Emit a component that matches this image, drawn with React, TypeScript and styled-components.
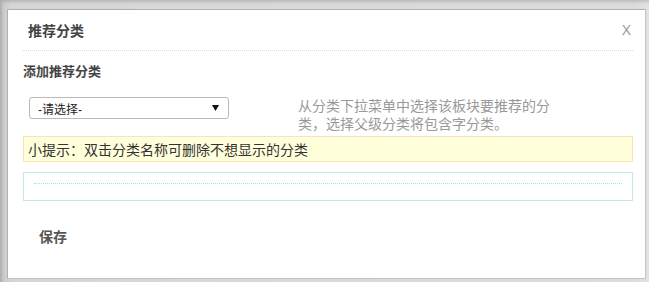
import { FC } from 'react';
import styled, { createGlobalStyle } from 'styled-components';

const GlobalStyle = createGlobalStyle`
  html, body {
    margin: 0;
    padding: 0;
    background: #e4e4e4;
  }
  body {
    font-family: 'Liberation Sans', 'Noto Sans CJK SC', sans-serif;
    font-size: 12px;
    color: #333;
  }
`;

const Frame = styled.div`
  width: 649px;
  height: 282px;
  box-sizing: border-box;
  padding: 9px 3px 3px 7px;
  background: linear-gradient(to right, #c9c9c9, #d6d6d6 2%, #dcdcdc 98%, #e2e2e2);
  box-shadow: inset 2px 2px 3px rgba(0, 0, 0, 0.14);
`;

const Dialog = styled.div`
  height: 270px;
  box-sizing: border-box;
  background: #fff;
  border: 1px solid #b0b0b0;
  border-right-color: #c4c4c4;
  border-bottom-color: #c4c4c4;
  padding: 0 12px 0 15px;
`;

const Header = styled.div`
  height: 40px;
  display: flex;
  align-items: center;
  justify-content: space-between;
  border-bottom: 1px dotted #d3dee1;
`;

const Title = styled.h3`
  margin: 0;
  padding-left: 5px;
  font-size: 14px;
  font-weight: bold;
  color: #444;
`;

const Close = styled.span`
  padding-right: 2px;
  font-size: 14px;
  color: #9a9a9a;
  cursor: pointer;
`;

const Label = styled.div`
  margin-top: 11px;
  line-height: 20px;
  font-size: 13px;
  font-weight: bold;
  color: #444;
`;

const PickRow = styled.div`
  display: flex;
  align-items: flex-start;
  margin-top: 15px;
  padding-left: 6px;
`;

const Select = styled.div`
  width: 200px;
  height: 22px;
  box-sizing: border-box;
  display: flex;
  align-items: center;
  justify-content: space-between;
  padding: 0 9px 0 8px;
  border: 1px solid #b9b9b9;
  border-radius: 3px;
  background: #fff;
  font-size: 12px;
  color: #222;
`;

const Hint = styled.p`
  margin: 0 0 0 69px;
  width: 256px;
  line-height: 18px;
  font-size: 14px;
  color: #999;
`;

const Tip = styled.div`
  margin-top: 3px;
  height: 26px;
  box-sizing: border-box;
  display: flex;
  align-items: center;
  padding-left: 4px;
  background: #ffffdc;
  border: 1px solid #fbe4b4;
  font-size: 14px;
  color: #333;
`;

const PickedBox = styled.div`
  margin-top: 10px;
  height: 29px;
  box-sizing: border-box;
  padding: 10px 10px 0 10px;
  border: 1px solid #c9e5ee;
`;

const DottedRule = styled.div`
  border-top: 1px dotted #a8e2f2;
`;

const SaveButton = styled.button`
  margin-top: 26px;
  margin-left: 16px;
  padding: 0;
  border: 0;
  background: none;
  line-height: 20px;
  font-family: inherit;
  font-size: 14px;
  font-weight: bold;
  color: #555;
  cursor: pointer;
`;

const Arrow: FC = () => (
  <svg width="7" height="6" viewBox="0 0 7 6">
    <path d="M0 0 H7 L3.5 6 Z" fill="#111" />
  </svg>
);

export default function App() {
  return (
    <>
      <GlobalStyle />
      <Frame>
        <Dialog>
          <Header>
            <Title>推荐分类</Title>
            <Close>X</Close>
          </Header>
          <Label>添加推荐分类</Label>
          <PickRow>
            <Select>
              <span>-请选择-</span>
              <Arrow />
            </Select>
            <Hint>从分类下拉菜单中选择该板块要推荐的分类，选择父级分类将包含字分类。</Hint>
          </PickRow>
          <Tip>小提示：双击分类名称可删除不想显示的分类</Tip>
          <PickedBox>
            <DottedRule />
          </PickedBox>
          <SaveButton>保存</SaveButton>
        </Dialog>
      </Frame>
    </>
  );
}
